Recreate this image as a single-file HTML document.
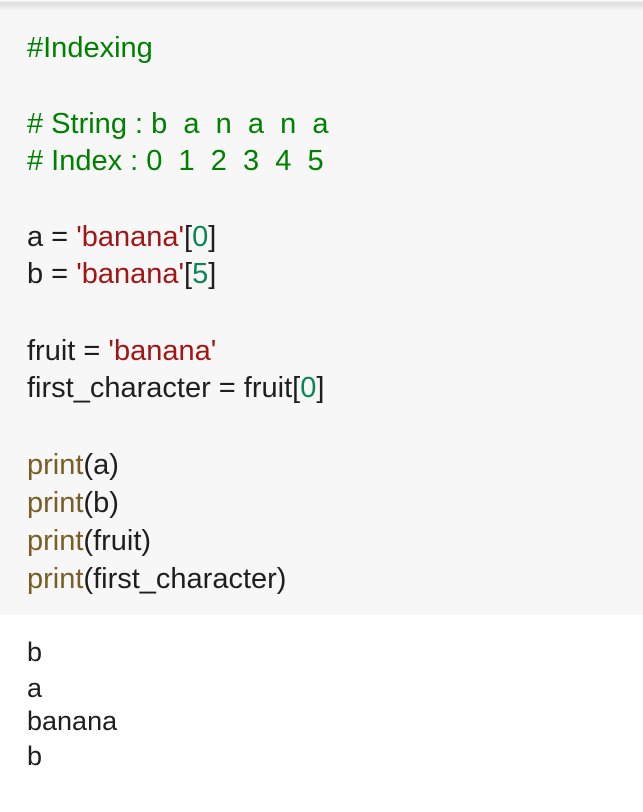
<!DOCTYPE html>
<html><head><style>
html,body{margin:0;padding:0;background:#fff;width:643px;height:812px;overflow:hidden}
body{font-family:"Liberation Sans","DejaVu Sans",sans-serif;font-size:29px;color:#1e1e1e}
.shadow{position:absolute;left:0;top:0;width:643px;height:12px;background:linear-gradient(#fff 0,#dcdcdc 3px,#f2f2f2 9px,#f7f7f7 12px)}
.code{position:absolute;left:0;top:12px;width:643px;height:603px;background:#f7f7f7}
.l{position:absolute;left:27px;white-space:pre;line-height:34px;transform:translateY(-16px)}
.o{font-size:27px}
.c{color:#008000}.s{color:#a31515}.n{color:#098658}.f{color:#795e26}
</style></head><body>
<div class="shadow"></div><div class="code"></div>
<div class="l c" style="top:47px">#Indexing</div>
<div class="l c" style="top:123px"># String : b  a  n  a  n  a</div>
<div class="l c" style="top:160px"># Index : 0  1  2  3  4  5</div>
<div class="l" style="top:236px">a = <span class="s">'banana'</span>[<span class="n">0</span>]</div>
<div class="l" style="top:273px">b = <span class="s">'banana'</span>[<span class="n">5</span>]</div>
<div class="l" style="top:350px">fruit = <span class="s">'banana'</span></div>
<div class="l" style="top:387px">first_character = fruit[<span class="n">0</span>]</div>
<div class="l" style="top:464px"><span class="f">print</span>(a)</div>
<div class="l" style="top:502px"><span class="f">print</span>(b)</div>
<div class="l" style="top:540px"><span class="f">print</span>(fruit)</div>
<div class="l" style="top:578px"><span class="f">print</span>(first_character)</div>
<div class="l o" style="top:651px">b</div>
<div class="l o" style="top:687px">a</div>
<div class="l o" style="top:720px">banana</div>
<div class="l o" style="top:755px">b</div>
</body></html>
